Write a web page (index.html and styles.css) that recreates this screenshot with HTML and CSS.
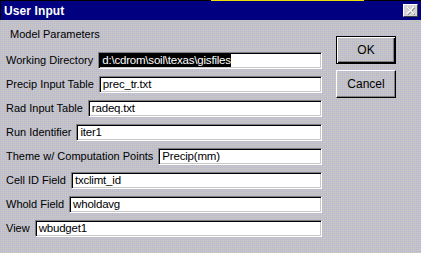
FILE: index.html
```html
<!DOCTYPE html>
<html lang="en">
<head>
    <meta charset="UTF-8">
    <title>User Input</title>
    <link rel="stylesheet" href="styles.css">
</head>
<body>
    <div class="top-strip"></div>
    <div class="titlebar">
        <span class="title">User Input</span>
        <span class="close-btn">
            <svg width="11" height="9" viewBox="0 0 11 9">
                <path d="M2 1 L9 8 M9 1 L2 8" stroke="#808080" stroke-width="1.6" transform="translate(0.6,0.6)"/>
                <path d="M2 1 L9 8 M9 1 L2 8" stroke="#ffffff" stroke-width="1.4"/>
            </svg>
        </span>
    </div>

    <div class="dialog">
        <div class="form">
            <div class="group-label">Model Parameters</div>
            <div class="rows">
                <div class="row">
                    <span class="label">Working Directory</span>
                    <div class="field"><span class="selected">d:\cdrom\soil\texas\gisfiles</span></div>
                </div>
                <div class="row">
                    <span class="label">Precip Input Table</span>
                    <div class="field">prec_tr.txt</div>
                </div>
                <div class="row">
                    <span class="label">Rad Input Table</span>
                    <div class="field">radeq.txt</div>
                </div>
                <div class="row">
                    <span class="label">Run Identifier</span>
                    <div class="field">iter1</div>
                </div>
                <div class="row">
                    <span class="label">Theme w/ Computation Points</span>
                    <div class="field">Precip(mm)</div>
                </div>
                <div class="row">
                    <span class="label">Cell ID Field</span>
                    <div class="field">txclimt_id</div>
                </div>
                <div class="row">
                    <span class="label">Whold Field</span>
                    <div class="field">wholdavg</div>
                </div>
                <div class="row">
                    <span class="label">View</span>
                    <div class="field">wbudget1</div>
                </div>
            </div>
        </div>

        <div class="buttons">
            <div class="btn btn-default"><span class="btn-face">OK</span></div>
            <div class="btn"><span class="btn-face">Cancel</span></div>
        </div>
    </div>
</body>
</html>
```

FILE: styles.css
```css
:root {
    --title-color: #000080;
    --face-color: #c0c0c0;
    --shadow-color: #808080;
}

body {
    margin: 0;
    width: 421px;
    height: 253px;
    overflow: hidden;
    font-family: "Liberation Sans", Arial, sans-serif;
    font-size: 11px;
    color: #000;
    background-color: #c2c2c8;
    background-image:
        linear-gradient(45deg, rgba(170,170,230,0.45) 25%, transparent 25%, transparent 75%, rgba(170,170,230,0.45) 75%),
        linear-gradient(45deg, rgba(215,215,175,0.35) 25%, transparent 25%, transparent 75%, rgba(215,215,175,0.35) 75%);
    background-size: 2px 2px, 2px 2px;
    background-position: 0 0, 1px 1px;
}

.top-strip {
    height: 1px;
    background: linear-gradient(to right, #000 0, #000 211px, #e8e000 211px, #e8e000 364px, #000 364px);
}

.titlebar {
    height: 19px;
    background: var(--title-color);
    border-left: 1px solid #000;
    display: flex;
    align-items: center;
    justify-content: space-between;
    padding: 0 3px 0 3px;
}

.title {
    color: #fff;
    font-weight: bold;
    font-size: 12px;
    letter-spacing: 0.1px;
}

.close-btn {
    width: 15px;
    height: 13px;
    box-sizing: border-box;
    background: #d4d4d4;
    border: 1px solid;
    border-color: #fff #404040 #404040 #fff;
    display: flex;
    align-items: center;
    justify-content: center;
}

.dialog {
    display: flex;
    align-items: flex-start;
}

.form {
    width: 322px;
    padding: 8px 0 0 6px;
    box-sizing: border-box;
}

.group-label {
    line-height: 13px;
    padding-left: 4px;
    margin-bottom: 11px;
}

.rows {
    display: flex;
    flex-direction: column;
    gap: 7px;
}

.row {
    display: flex;
    align-items: center;
    gap: 5px;
    height: 17px;
}

.label {
    white-space: nowrap;
    line-height: 13px;
}

.field {
    flex: 1;
    height: 17px;
    box-sizing: border-box;
    background: #fff;
    border: 1px solid;
    border-color: #808080 #fff #fff #808080;
    box-shadow: inset 1px 1px #000, inset -1px -1px #c8c8c8;
    padding: 0 2px 0 3px;
    line-height: 15px;
    font-size: 11.5px;
    letter-spacing: -0.2px;
    white-space: nowrap;
    overflow: hidden;
}

.selected {
    display: inline-block;
    background: #000;
    color: #fff;
    margin-left: -2px;
    padding-left: 2px;
    margin-top: 1px;
    line-height: 13px;
    vertical-align: top;
}

.buttons {
    display: flex;
    flex-direction: column;
    gap: 6px;
    margin: 16px 0 0 14px;
}

.btn {
    width: 60px;
    height: 28px;
    box-sizing: border-box;
    border: 1px solid;
    border-color: #fff #000 #000 #fff;
    box-shadow: inset -1px -1px var(--shadow-color);
    display: flex;
}

.btn-default {
    border: 1px solid #000;
    box-shadow: inset 1px 1px #fff, inset -1px -1px #000, inset -2px -2px var(--shadow-color);
}

.btn-face {
    flex: 1;
    display: flex;
    align-items: center;
    justify-content: center;
    font-size: 12px;
}
```
